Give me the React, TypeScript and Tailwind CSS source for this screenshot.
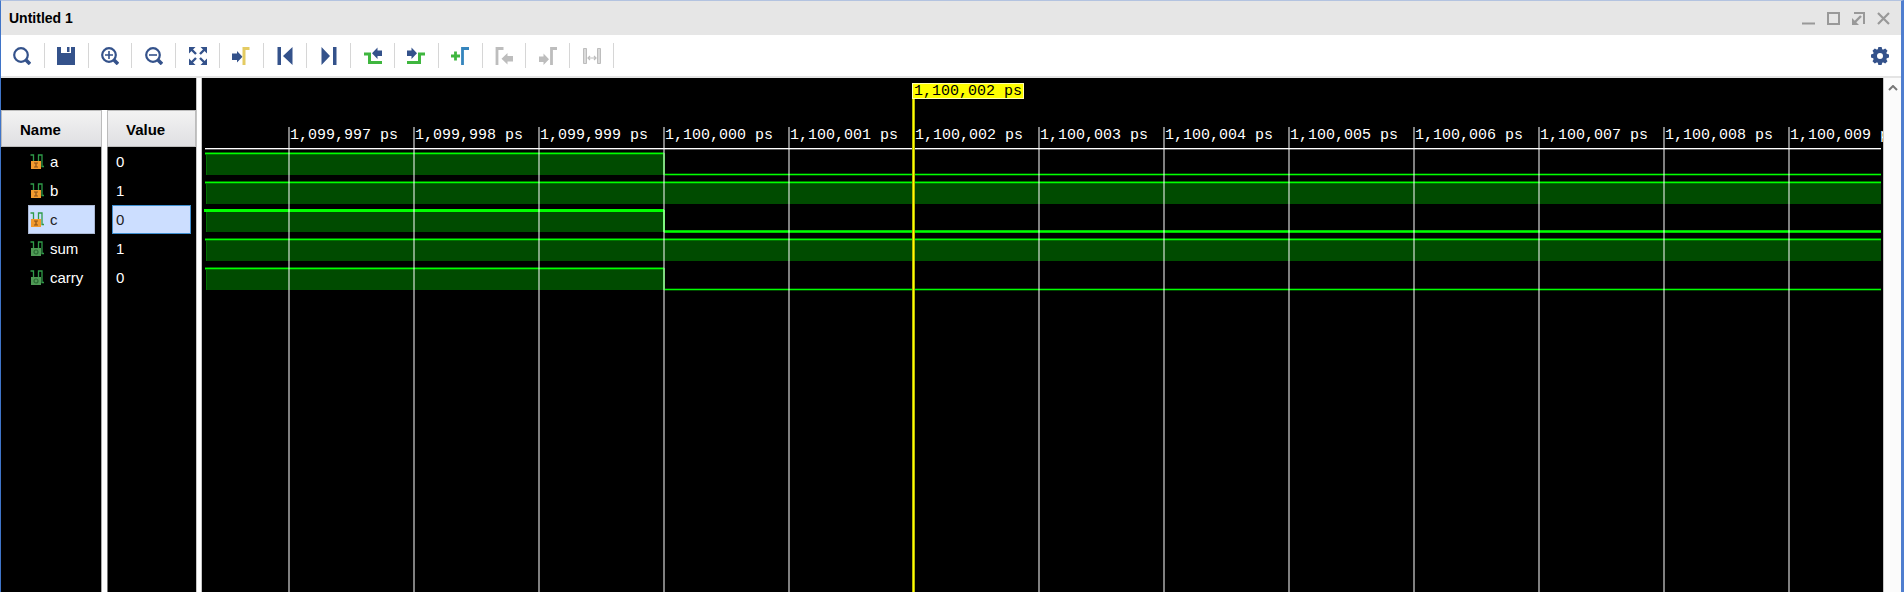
import type { ReactNode } from "react";

const NAVY = "#34528b";
const GREEN = "#3fb63f";
const GREY = "#bdbdbd";

type Tool = { label: string; icon: ReactNode; disabled?: boolean };

const lens = (
  <>
    <circle cx="8" cy="8" r="6.8" fill="none" stroke={NAVY} strokeWidth="2.2" />
    <path d="M13 13L17 17" stroke={NAVY} strokeWidth="3.6" />
  </>
);

const tools: Tool[] = [
  { label: "Search", icon: lens },
  {
    label: "Save",
    icon: (
      <path fill={NAVY} fillRule="evenodd" d="M0 0H4V6H14V0H18V18H0ZM10 0H12.5V5H10Z" />
    ),
  },
  {
    label: "Zoom in",
    icon: (
      <>
        {lens}
        <path d="M4 8H12M8 4V12" stroke={NAVY} strokeWidth="1.6" />
      </>
    ),
  },
  {
    label: "Zoom out",
    icon: (
      <>
        {lens}
        <path d="M4 8H12" stroke={NAVY} strokeWidth="1.6" />
      </>
    ),
  },
  {
    label: "Zoom fit",
    icon: (
      <>
        <path fill={NAVY} d="M0 0H6.5L0 6.5ZM18 0V6.5L11.5 0ZM0 18V11.5L6.5 18ZM18 18H11.5L18 11.5Z" />
        <path d="M2 2L7 7M16 2L11 7M2 16L7 11M16 16L11 11" stroke={NAVY} strokeWidth="2.4" />
      </>
    ),
  },
  {
    label: "Go to cursor",
    icon: (
      <>
        <path fill={NAVY} d="M0 6.5H5V4L10.5 9.7L5 15.5V13H0Z" />
        <path d="M12 18V1.5H17.5" fill="none" stroke="#e4cb62" strokeWidth="3" />
      </>
    ),
  },
  {
    label: "Go to start",
    icon: <path fill={NAVY} d="M1.5 0H5V18H1.5ZM16.5 0V18L7 9Z" />,
  },
  {
    label: "Go to end",
    icon: <path fill={NAVY} d="M13 0H16.5V18H13ZM1.5 0V18L10 9Z" />,
  },
  {
    label: "Previous transition",
    icon: (
      <>
        <path d="M0 7H5.5V15.5H18" fill="none" stroke={GREEN} strokeWidth="3" />
        <path fill={NAVY} d="M18 3.5H13.5V0.5L8 6.3L13.5 12V9H18Z" />
      </>
    ),
  },
  {
    label: "Next transition",
    icon: (
      <>
        <path d="M0 15.5H12.5V7H18" fill="none" stroke={GREEN} strokeWidth="3" />
        <path fill={NAVY} d="M0 3.5H4.5V0.5L10 6.3L4.5 12V9H0Z" />
      </>
    ),
  },
  {
    label: "Add marker",
    icon: (
      <>
        <path d="M0 9H9M4.5 4.5V13.5" stroke={GREEN} strokeWidth="2.8" />
        <path d="M11.5 18V1.5H18" fill="none" stroke="#3585bd" strokeWidth="2.8" />
      </>
    ),
  },
  {
    label: "Previous marker",
    disabled: true,
    icon: (
      <>
        <path d="M2 18V1.5H8.5" fill="none" stroke={GREY} strokeWidth="2.8" />
        <path fill={GREY} d="M18 9H12.5V6L6.5 11.7L12.5 17.4V14.5H18Z" />
      </>
    ),
  },
  {
    label: "Next marker",
    disabled: true,
    icon: (
      <>
        <path d="M12.5 18V1.5H18" fill="none" stroke={GREY} strokeWidth="2.8" />
        <path fill={GREY} d="M0 9.5H4.5V6.5L10 12.3L4.5 18V15H0Z" />
      </>
    ),
  },
  {
    label: "Swap cursors",
    disabled: true,
    icon: (
      <>
        <path d="M0.5 1.5H3.5V16.5H0.5ZM14.5 1.5H17.5V16.5H14.5Z" fill="#dadada" stroke={GREY} strokeWidth="1" />
        <path d="M5 11H13M7 9L5 11L7 13M11 9L13 11L11 13" fill="none" stroke={GREY} strokeWidth="1.2" />
      </>
    ),
  },
];

const controls = [
  { label: "Minimize", icon: <path d="M0 11.5H13" /> },
  { label: "Maximize", icon: <path d="M1 1H12V12H1Z" /> },
  {
    label: "Float",
    icon: (
      <>
        <path d="M2 1H12V12" />
        <path d="M9 4L3 10" strokeWidth="2.4" />
        <path d="M0 6V13H7Z" fill="#999999" stroke="none" />
      </>
    ),
  },
  { label: "Close", icon: <path d="M1 1L12 12M12 1L1 12" strokeWidth="2.2" /> },
];

type Signal = { name: string; value: string; input: boolean; selected?: boolean };

const signals: Signal[] = [
  { name: "a", value: "0", input: true },
  { name: "b", value: "1", input: true },
  { name: "c", value: "0", input: true, selected: true },
  { name: "sum", value: "1", input: false },
  { name: "carry", value: "0", input: false },
];

/* Each trace is high until `fall`; traces without one stay high. */
const traces = [
  { y: 6, fall: 460 },
  { y: 35 },
  { y: 63, fall: 460, thick: true },
  { y: 92 },
  { y: 121, fall: 460 },
];

const ticks = [
  "1,099,997 ps",
  "1,099,998 ps",
  "1,099,999 ps",
  "1,100,000 ps",
  "1,100,001 ps",
  "1,100,002 ps",
  "1,100,003 ps",
  "1,100,004 ps",
  "1,100,005 ps",
  "1,100,006 ps",
  "1,100,007 ps",
  "1,100,008 ps",
  "1,100,009 ps",
];

function SignalIcon({ input }: { input: boolean }) {
  return (
    <svg viewBox="0 0 14 15" className="h-[15px] w-[14px] shrink-0" aria-hidden="true">
      <path d="M0.5 1H3.5V9M8.5 9V1H12V12.5H14" fill="none" stroke="#2f9a48" strokeWidth="1.3" />
      {input ? (
        <>
          <path d="M1 7H11V15H1Z" fill="#f29a2e" />
          <path d="M4 9H8M6 9V13M4 13H8" stroke="#8a5218" strokeWidth="1.2" />
        </>
      ) : (
        <>
          <path d="M1 7H11V15H1Z" fill="#4f9a55" />
          <circle cx="6" cy="11" r="2" fill="none" stroke="#2b6b35" strokeWidth="1.2" />
        </>
      )}
    </svg>
  );
}

function Waves() {
  return (
    <svg width="100%" height="150" shapeRendering="crispEdges" aria-hidden="true">
      <rect x="1" y="1" width="100%" height="1" fill="#ffffff" />
      <rect x="1" y="2" width="100%" height="1" fill="#5a5a5a" />
      {traces.map(({ y, fall, thick }) => (
        <g key={y}>
          <rect x="2" y={y} width={fall ? fall - 2 : "100%"} height="22" fill="#004b00" />
          <rect x="2" y={y} width="1" height="22" fill="#006e00" />
          <rect x="1" y={y - 1} width={fall ? fall - 1 : "100%"} height="3" fill="#007800" />
          <rect x={thick ? 0 : 1} y={thick ? y - 1 : y} width={fall ?? "100%"} height={thick ? 3 : 1} fill="#00ff00" />
          {fall && (
            <>
              <rect x={fall} y={y + 20} width="100%" height="3" fill={thick ? "#00c800" : "#004800"} />
              <rect x={fall} y={y + 21} width="100%" height="1" fill="#00ff00" />
              <rect x={fall - 1} y={y} width="2" height="22" fill={thick ? "#00f000" : "#00b400"} />
            </>
          )}
        </g>
      ))}
    </svg>
  );
}

const gearTeeth = [0, 45, 90, 135, 180, 225, 270, 315];

export default function App() {
  return (
    <div className="flex min-h-screen flex-col border-t border-r-[3px] border-l border-t-[#b3c3e0] border-r-[#4f7ecf] border-l-[#3f74c8] bg-white font-['Liberation_Sans',sans-serif] text-[15px] text-black">
      <header className="flex h-[34px] items-center justify-between bg-[#e6e6e6] pr-[11px] pl-2">
        <h1 className="text-[14px] font-bold">Untitled 1</h1>
        <div className="flex gap-3">
          {controls.map((c) => (
            <button key={c.label} type="button" aria-label={c.label}>
              <svg viewBox="0 0 13 13" className="h-[13px] w-[13px]" fill="none" stroke="#999999" strokeWidth="2">
                {c.icon}
              </svg>
            </button>
          ))}
        </div>
      </header>

      <div className="flex h-[43px] items-start justify-between border-b-2 border-[#e4e4e4] pr-3">
        <div role="toolbar" aria-label="Waveform" className="grid h-[41px] w-[613px] grid-cols-14 items-center">
          {tools.map((t) => (
            <button
              key={t.label}
              type="button"
              aria-label={t.label}
              disabled={t.disabled}
              className="flex h-[25px] items-center justify-center border-r border-[#d6d6d6]"
            >
              <svg viewBox="0 0 18 18" className="h-[18px] w-[18px]">
                {t.icon}
              </svg>
            </button>
          ))}
        </div>
        <button type="button" aria-label="Settings" className="flex h-[41px] items-center">
          <svg viewBox="-9 -9 18 18" className="h-[18px] w-[18px]">
            <circle r="5" fill="none" stroke={NAVY} strokeWidth="4" />
            {gearTeeth.map((a) => (
              <path key={a} d="M-2.4 -6L-1.6 -9H1.6L2.4 -6Z" fill={NAVY} transform={`rotate(${a})`} />
            ))}
          </svg>
        </button>
      </div>

      <main className="flex flex-1">
        <section className="flex w-[195px] shrink-0 flex-col bg-black">
          <div className="h-8" />
          <table className="w-full flex-1 table-fixed border-separate border-spacing-0 text-white">
            <thead>
              <tr className="h-[37px] text-left text-black">
                <th className="w-[106px] border-r-[5px] border-white bg-linear-to-b from-[#f3f3f3] to-[#dfdfe2] pt-1 pl-[19px] shadow-[inset_0_0_0_1px_#bcbcbc]">
                  Name
                </th>
                <th className="bg-linear-to-b from-[#f3f3f3] to-[#dfdfe2] pt-1 pl-[19px] shadow-[inset_0_0_0_1px_#bcbcbc]">
                  Value
                </th>
              </tr>
            </thead>
            <tbody>
              {signals.map((s) => (
                <tr key={s.name} className="h-[29px]">
                  <td className="border-r-[5px] border-white p-0 pl-[27px] shadow-[inset_-1px_0_#a8a8a8]">
                    <div
                      className={
                        s.selected
                          ? "flex h-[29px] w-[67px] items-center gap-1.5 border border-[#aab8d4] bg-[#ccdeff] pl-px text-[#222222]"
                          : "flex h-[29px] w-[67px] items-center gap-1.5 border border-transparent pl-px"
                      }
                    >
                      <SignalIcon input={s.input} />
                      <span className="pt-0.5">{s.name}</span>
                    </div>
                  </td>
                  <td className="p-0 pr-[5px] pl-[5px] shadow-[inset_1px_0_#777777]">
                    <div
                      className={
                        s.selected
                          ? "flex h-[29px] items-center border border-[#3f8fd0] bg-[#ccdeff] pl-[3px] text-[#222222]"
                          : "flex h-[29px] items-center border border-transparent pl-[3px]"
                      }
                    >
                      <span className="pt-0.5">{s.value}</span>
                    </div>
                  </td>
                </tr>
              ))}
              <tr aria-hidden="true">
                <td className="border-r-[5px] border-white shadow-[inset_-1px_0_#a8a8a8]" />
                <td className="shadow-[inset_1px_0_#777777]" />
              </tr>
            </tbody>
          </table>
        </section>

        <div className="w-[6px] shrink-0 border-x border-x-[#c4c4c4] bg-white" />

        <section className="relative grid min-w-0 flex-1 overflow-hidden bg-black font-['Liberation_Mono',monospace] text-white">
          <div className="col-start-1 row-start-1 min-w-0 pt-[69px] pr-[2px] pl-[2px]">
            <Waves />
          </div>
          <div className="col-start-1 row-start-1 flex min-w-0 overflow-hidden pt-[49px] pl-[86px]">
            {ticks.map((t) => (
              <div key={t} className="w-[125px] shrink-0 border-l-2 border-white/50 whitespace-pre">
                <div className="h-5 leading-[18px]">{t}</div>
              </div>
            ))}
          </div>
          <div className="absolute top-[5px] bottom-0 left-[710px]">
            <div className="h-4 border border-[#ffffb0] bg-[#ffff00] px-px leading-4 text-black">
              1,100,002 ps
            </div>
            <div className="h-full w-[3px] border-x border-[#b8b800] bg-[#ffff00]" />
          </div>
        </section>

        <div className="flex w-[18px] shrink-0 justify-center border-l border-[#c8c8c8] bg-[#fbfbfb]">
          <button type="button" aria-label="Scroll up" className="flex h-5 items-center">
            <svg viewBox="0 0 10 6" className="h-[6px] w-[10px]" fill="none" stroke="#777777" strokeWidth="2">
              <path d="M1 5L5 1L9 5" />
            </svg>
          </button>
        </div>
      </main>
    </div>
  );
}
